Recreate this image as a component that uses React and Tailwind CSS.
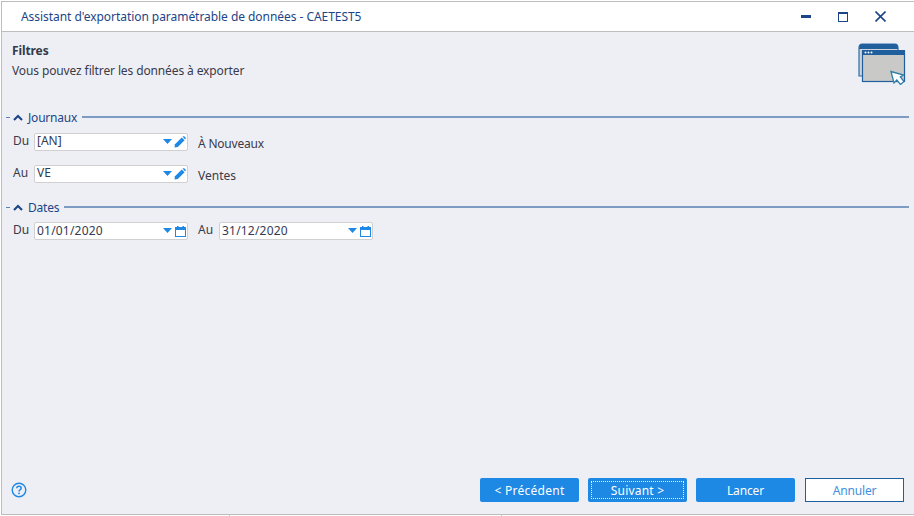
import React from "react";

function Chevron() {
  return (
    <svg width="10" height="7" viewBox="0 0 10 7" className="block">
      <path d="M1 6 L5 2 L9 6" fill="none" stroke="#1c4587" strokeWidth="2.1" />
    </svg>
  );
}

function Section({ title, children }) {
  return (
    <div>
      <div className="flex items-center h-[14px] text-[#1c4587]">
        <span className="w-[4px] h-px bg-[#5b82b5] mr-[3px]" />
        <Chevron />
        <span className="ml-[5px] mr-[5px] leading-[14px] relative top-px tracking-[-0.2px]">{title}</span>
        <span className="flex-1 h-[2px] bg-[#7d9cc4]" />
      </div>
      {children}
    </div>
  );
}

function Arrow() {
  return (
    <svg width="9" height="5" viewBox="0 0 9 5" className="block">
      <path d="M0 0 H9 L4.5 5 Z" fill="#1e88e5" />
    </svg>
  );
}

function Pencil() {
  return (
    <svg width="12" height="12" viewBox="0 0 12 12" className="block">
      <path d="M0.5 11.5 L1 8.2 L7.8 1.4 L10.6 4.2 L3.8 11 Z" fill="#1e88e5" />
      <path d="M8.6 0.7 L9.4 0.2 Q10 0 10.5 0.4 L11.6 1.5 Q12 2 11.7 2.6 L11.3 3.4 Z" fill="#1e88e5" />
    </svg>
  );
}

function Calendar() {
  return (
    <svg width="11" height="11" viewBox="0 0 11 11" className="block">
      <rect x="0.5" y="1.5" width="10" height="9" fill="none" stroke="#1e88e5" />
      <rect x="0" y="1" width="11" height="3" fill="#1e88e5" />
      <rect x="2" y="0" width="1.5" height="2" fill="#1e88e5" />
      <rect x="7.5" y="0" width="1.5" height="2" fill="#1e88e5" />
    </svg>
  );
}

function Field({ value, icon, date }) {
  return (
    <div className="flex items-center w-[154px] h-[18px] bg-white border border-[#d0d0d0] rounded-[2px] pl-[2px] text-[#333a52]">
      <span className={date ? "flex-1 leading-[16px] tracking-[0.2px]" : "flex-1 leading-[16px] relative top-[-1px]"}>{value}</span>
      <span className="mr-[2px] relative top-[-1px]"><Arrow /></span>
      <span className="mr-[1px] w-[12px] flex justify-center">{icon}</span>
    </div>
  );
}

function Btn({ children, focus, track }) {
  return (
    <button className="relative w-[99px] h-[24px] bg-[#1e88e5] rounded-[2px] text-white flex items-center justify-center">
      {focus && <span className="absolute inset-[3px] border border-dotted border-white" />}
      <span className={"relative top-px " + track}>{children}</span>
    </button>
  );
}

export default function App() {
  return (
    <div
      className="relative w-[914px] h-[516px] bg-white pt-px pl-px pb-px overflow-hidden text-[12px] text-[#3a3a4a]"
      style={{ fontFamily: '"Noto Sans", sans-serif' }}
    >
      <div className="w-[913px] h-[514px] border border-[#bdbdbd] border-r-0 flex flex-col bg-[#eeeff4]">
        <div className="h-[29px] bg-white border-b border-[#bdbdbd] flex items-center shrink-0 box-content">
          <span className="ml-[19px] flex-1 text-[#1c4587] tracking-[-0.05px]">Assistant d'exportation paramétrable de données - CAETEST5</span>
          <div className="flex items-center mr-[28px] gap-[26px]">
            <svg width="10" height="3" viewBox="0 0 10 3" className="mr-[1px]"><rect width="10" height="3" fill="#1c4587" /></svg>
            <svg width="10" height="10" viewBox="0 0 10 10"><rect x="0.5" y="0.5" width="9" height="9" fill="none" stroke="#1c4587" /><rect width="10" height="2" fill="#1c4587" /></svg>
            <svg width="11" height="11" viewBox="0 0 11 11" className="ml-[1px]"><path d="M0.5 0.5 L10.5 10.5 M10.5 0.5 L0.5 10.5" stroke="#1c4587" strokeWidth="1.6" /></svg>
          </div>
        </div>
        <div className="flex-1 flex flex-col pl-[4px] pr-[5px]">
          <div className="flex justify-between h-[78px]">
            <div className="pl-[6px] pt-[10px]">
              <div className="font-bold text-[#333a4a] leading-[17px] tracking-[-0.1px]">Filtres</div>
              <div className="mt-[3px] leading-[17px] tracking-[-0.12px]">Vous pouvez filtrer les données à exporter</div>
            </div>
            <svg width="48" height="42" viewBox="0 0 48 42" className="mt-[11px] mr-[3px]">
              <path d="M1 5 Q1 1 4 1 H37 Q40 1 40 5 V33 H1 Z" fill="#cfd3d8" stroke="#2f6ca8" strokeWidth="1.2" />
              <path d="M1 6 Q1 1 4 1 H37 Q40 1 40 6 Z" fill="#1f5f9e" />
              <rect x="4.5" y="8.5" width="42" height="30" fill="#c9c9c7" stroke="#1f5f9e" strokeWidth="1.2" />
              <rect x="4" y="7" width="43" height="5" fill="#1f5f9e" />
              <circle cx="7.5" cy="9.5" r="1" fill="#fff" /><circle cx="10.5" cy="9.5" r="1" fill="#fff" /><circle cx="13.5" cy="9.5" r="1" fill="#fff" />
              <path d="M33 28.5 L36 40 L38.8 37 L42.5 41.5 L46 38.5 L42.3 34 L45.5 32 Z" fill="#fff" stroke="#2f7fa8" strokeWidth="1.3" />
            </svg>
          </div>
          <Section title="Journaux">
            <div className="mt-[9px] flex items-center h-[18px]">
              <span className="w-[28px] pl-[7px] relative top-[-1px]">Du</span>
              <Field value="[AN]" icon={<Pencil />} />
              <span className="ml-[10px] mt-[3px] tracking-[-0.2px]">À Nouveaux</span>
            </div>
            <div className="mt-[14px] flex items-center h-[18px]">
              <span className="w-[28px] pl-[7px] relative top-[-1px]">Au</span>
              <Field value="VE" icon={<Pencil />} />
              <span className="ml-[10px] mt-[4px]">Ventes</span>
            </div>
          </Section>
          <div className="mt-[17px]">
            <Section title="Dates">
              <div className="mt-[8px] flex items-center h-[18px]">
                <span className="w-[28px] pl-[7px] relative top-[-1px]">Du</span>
                <Field value="01/01/2020" date icon={<Calendar />} />
                <span className="w-[31px] pl-[10px] relative top-[-1px]">Au</span>
                <Field value="31/12/2020" date icon={<Calendar />} />
              </div>
            </Section>
          </div>
          <div className="flex-1" />
          <div className="flex items-center justify-between h-[24px] mb-[12px] pr-[5px]">
            <svg width="16" height="16" viewBox="0 0 16 16" className="ml-[5px]">
              <circle cx="8" cy="8" r="6.8" fill="none" stroke="#1e88e5" strokeWidth="1.4" />
              <path d="M5.8 6.3 Q5.9 4.2 8 4.2 Q10.2 4.2 10.2 6 Q10.2 7.1 9 7.8 Q8 8.4 8 9.6" fill="none" stroke="#1e88e5" strokeWidth="1.5" />
              <rect x="7.2" y="10.6" width="1.6" height="1.6" fill="#1e88e5" />
            </svg>
            <div className="flex items-center gap-[9px]">
              <Btn track="tracking-[0.27px]">&lt; Précédent</Btn>
              <Btn focus track="tracking-[0.2px]">Suivant &gt;</Btn>
              <Btn track="tracking-[-0.15px]">Lancer</Btn>
              <button className="ml-px w-[99px] h-[24px] bg-white border border-[#1f5f9e] text-[#3f8fe0] flex items-center justify-center">
                <span className="relative top-px tracking-[-0.15px]">Annuler</span>
              </button>
            </div>
          </div>
        </div>
      </div>
      <span className="absolute left-[229px] top-[515px] w-px h-px bg-[#a9cdeb]" />
      <span className="absolute left-[501px] top-[515px] w-px h-px bg-[#a9cdeb]" />
    </div>
  );
}
